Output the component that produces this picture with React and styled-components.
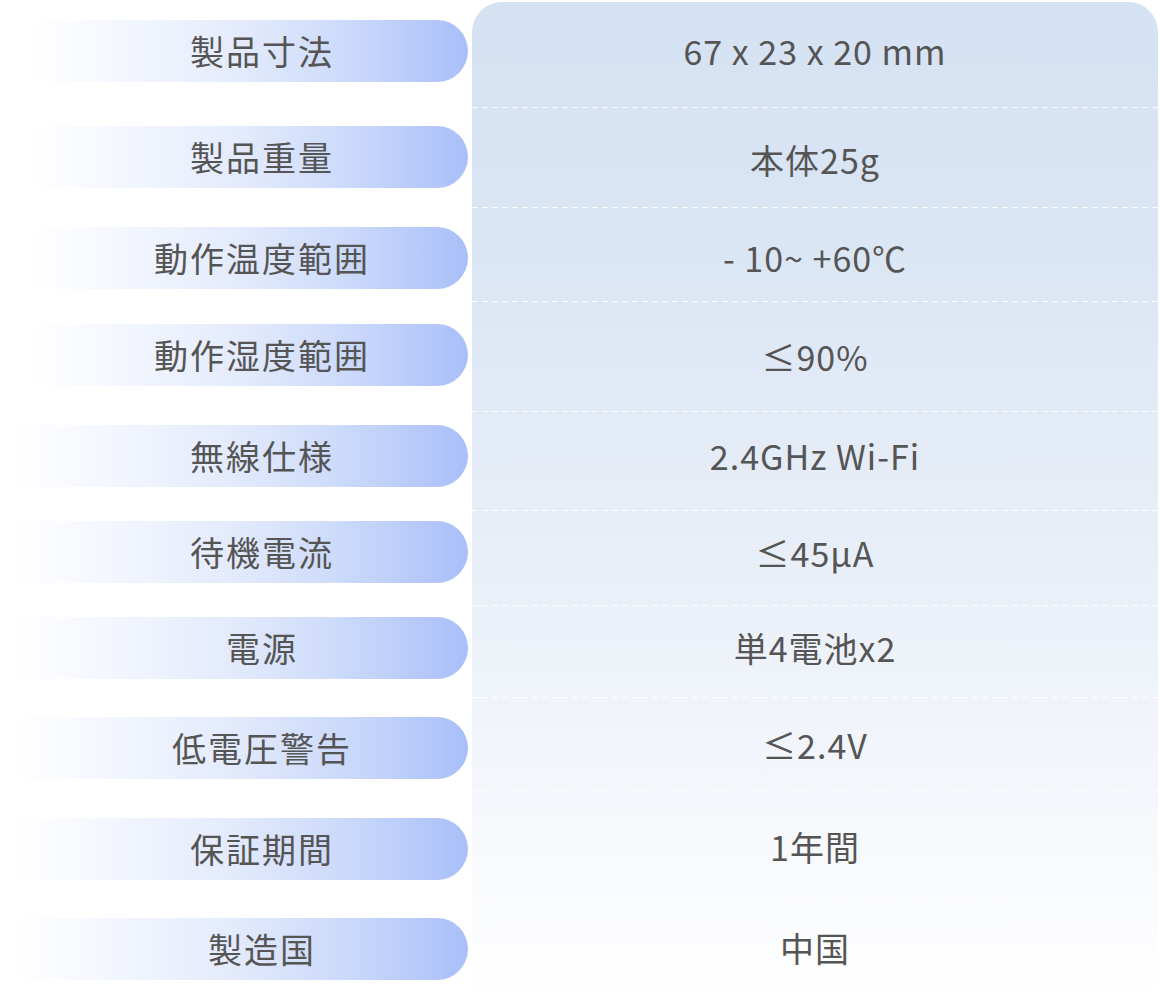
import React from 'react';
import styled, { createGlobalStyle } from 'styled-components';

// lh = label row height, vh = value row height, dy = small nudge of the value text
const specs = [
  { label: '製品寸法', value: '67 x 23 x 20 mm', lh: 102, vh: 106, dy: -4, start: 32 },
  { label: '製品重量', value: '本体25g', lh: 110, vh: 100, dy: 2, start: 32 },
  { label: '動作温度範囲', value: '- 10~ +60℃', lh: 92, vh: 94, dy: 3, start: 32 },
  { label: '動作湿度範囲', value: '≤90%', lh: 102, vh: 110, dy: 0, start: 32 },
  { label: '無線仕様', value: '2.4GHz Wi-Fi', lh: 100, vh: 99, dy: -6, start: 14 },
  { label: '待機電流', value: '≤45μA', lh: 92, vh: 95, dy: -6, start: 14 },
  { label: '電源', value: '単4電池x2', lh: 100, vh: 92, dy: -4, start: 14 },
  { label: '低電圧警告', value: '≤2.4V', lh: 100, vh: 93, dy: 0, start: 14 },
  { label: '保証期間', value: '1年間', lh: 102, vh: 107, dy: 2, start: 14 },
  { label: '製造国', value: '中国', lh: 98, vh: 98, dy: 1, start: 14 },
];

const GlobalStyle = createGlobalStyle`
  html, body {
    margin: 0;
    padding: 0;
    background: #ffffff;
  }
  body {
    font-family: "Noto Sans CJK JP", "Noto Sans", sans-serif;
    color: #555555;
  }
`;

const Page = styled.div`
  display: flex;
  width: 1160px;
  height: 996px;
  overflow: hidden;
`;

const LabelColumn = styled.div`
  display: flex;
  flex-direction: column;
  width: 472px;
  flex-shrink: 0;
`;

const LabelRow = styled.div`
  display: flex;
  align-items: center;
  flex-shrink: 0;
  height: ${p => p.$h}px;
  padding-left: ${p => p.$start}px;
  padding-right: 4px;
  box-sizing: border-box;
`;

const Pill = styled.div`
  flex: 1;
  height: 62px;
  display: flex;
  align-items: center;
  justify-content: center;
  padding-left: ${p => 2 * (262 - (p.$start + (468 - p.$start) / 2))}px;
  border-radius: 0 31px 31px 0;
  background: linear-gradient(
    90deg,
    rgba(255, 255, 255, 0) 0%,
    #f4f7fe 20%,
    #e4ebfc 47%,
    #cbd9fa 73%,
    #a8bff8 100%
  );
  font-size: 34px;
  line-height: 1;
  letter-spacing: 2px;
  color: #555555;
`;

const Panel = styled.div`
  flex: 1;
  margin: 2px 2px 0 0;
  display: flex;
  flex-direction: column;
  border-radius: 30px 30px 0 0;
  background: linear-gradient(
    180deg,
    #d5e2f3 0%,
    #dbe6f4 25%,
    #e6edf7 50%,
    #f2f5fb 75%,
    #ffffff 100%
  );
`;

const ValueRow = styled.div`
  position: relative;
  display: flex;
  align-items: center;
  justify-content: center;
  flex-shrink: 0;
  height: ${p => p.$h}px;

  &::after {
    content: '';
    display: ${p => (p.$last ? 'none' : 'block')};
    position: absolute;
    left: 0;
    right: 0;
    bottom: 0;
    height: 1px;
    background: repeating-linear-gradient(
      90deg,
      rgba(255, 255, 255, 0.9) 0 6px,
      transparent 6px 10px
    );
  }
`;

const ValueText = styled.span`
  font-size: 34px;
  line-height: 1;
  letter-spacing: 1px;
  color: #555555;
  transform: translateY(${p => p.$dy}px);
`;

export default function App() {
  return (
    <>
      <GlobalStyle />
      <Page>
        <LabelColumn>
          {specs.map(s => (
            <LabelRow key={s.label} $h={s.lh} $start={s.start}>
              <Pill $start={s.start}>{s.label}</Pill>
            </LabelRow>
          ))}
        </LabelColumn>
        <Panel>
          {specs.map((s, i) => (
            <ValueRow key={s.label} $h={s.vh} $last={i === specs.length - 1}>
              <ValueText $dy={s.dy}>{s.value}</ValueText>
            </ValueRow>
          ))}
        </Panel>
      </Page>
    </>
  );
}
